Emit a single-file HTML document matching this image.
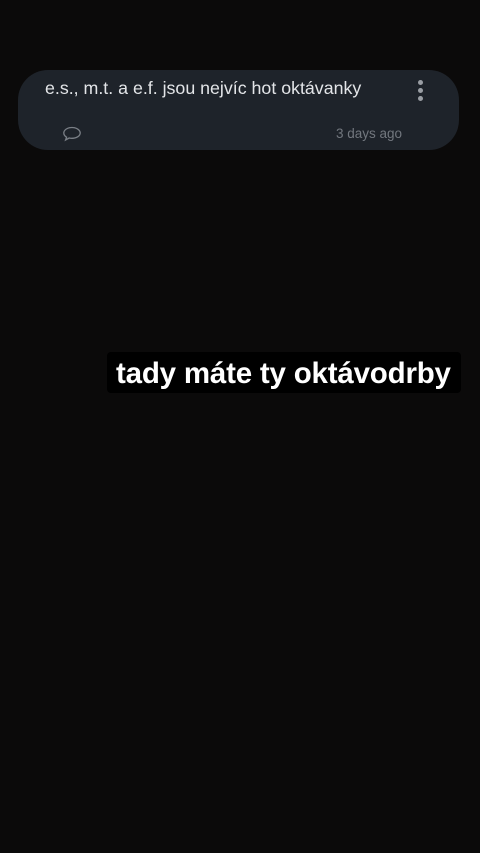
<!DOCTYPE html>
<html><head><meta charset="utf-8"><style>
html,body{margin:0;padding:0;width:480px;height:853px;background:#0b0a0a;overflow:hidden;font-family:"Liberation Sans",sans-serif}
.card{position:absolute;left:18px;top:70px;width:441px;height:80px;background:#1e232a;border-radius:30px}
.t{position:absolute;left:45px;top:78px;color:#e3e5e8;font-size:17.8px;white-space:nowrap}
.dot{position:absolute;left:418px;width:5px;height:5px;border-radius:50%;background:#9a9ea4}
.time{position:absolute;left:336px;top:126px;color:#72777e;font-size:13.5px}
.cap{position:absolute;left:107px;top:352px;width:354px;height:41px;background:#000;border-radius:4px}
.capt{position:absolute;left:116px;top:357px;color:#fff;font-weight:bold;font-size:29.5px;white-space:nowrap;letter-spacing:-0.2px}
</style></head><body>
<div class="card"></div>
<div class="t">e.s., m.t. a e.f. jsou nejvíc hot oktávanky</div>
<div class="dot" style="top:80px"></div>
<div class="dot" style="top:88px"></div>
<div class="dot" style="top:96px"></div>
<svg style="position:absolute;left:62px;top:126px" width="20" height="16" viewBox="0 0 20 16"><path d="M10 1.5C5.3 1.5 1.8 4 1.8 7c0 1.7 1.1 3.2 2.8 4.2L3.6 14l3.6-2c.9.2 1.8.3 2.8.3 4.7 0 8.2-2.5 8.2-5.3S14.7 1.5 10 1.5z" fill="none" stroke="#7a7f86" stroke-width="1.3"/></svg>
<div class="time">3 days ago</div>
<div class="cap"></div>
<div class="capt">tady máte ty oktávodrby</div>
</body></html>
